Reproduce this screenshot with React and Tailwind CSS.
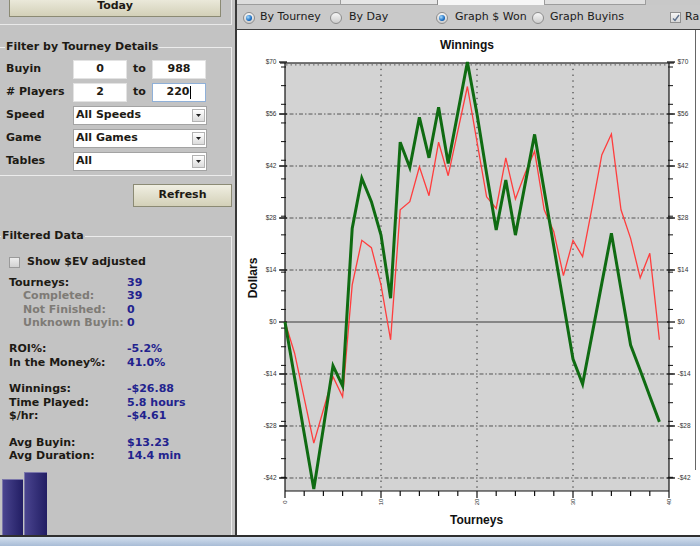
import React from 'react';

const green = [0, -15, -30, -45, -28.5, -11.8, -17.2, 25.2, 38.7, 32.4, 23.4, 6.4, 48.4, 41.6, 55.1, 44.2, 57.8, 42.7, 56.3, 70, 56, 40, 24.8, 38.2, 23.4, 37, 50.5, 35.4, 20.3, 5.2, -10, -16.7, -3.2, 10.4, 23.9, 8.8, -6.2, -13, -20, -26.9];
const red = [0, -8.4, -20.5, -32.6, -23.6, -14.7, -20.1, 10, 22, 20, 10, -4.8, 30.2, 32.4, 41.8, 34, 48.4, 39.4, 51.4, 63.4, 48.5, 33.7, 30.6, 44.2, 33.1, 40, 46, 30.2, 24.3, 12.5, 22, 17.6, 31, 45, 50.6, 30.2, 22.5, 11.9, 18.5, -4.8];

const X = (i) => 285 + i * 9.6;
const Y = (v) => 322 - v * 3.714;
const toPoints = (arr) => arr.map((v, i) => `${X(i).toFixed(1)},${Y(v).toFixed(1)}`).join(' ');

const majors = [70, 56, 42, 28, 14, 0, -14, -28, -42];

function Radio({ checked }) {
  return (
    <span className="w-[12px] h-[12px] shrink-0 rounded-full border border-[#8c8c8c] bg-linear-to-b from-[#f6f6f6] to-[#cdcdcd] flex items-center justify-center">
      {checked && (
        <span className="w-[6px] h-[6px] rounded-full bg-[radial-gradient(circle_at_35%_35%,#a6dcff,#1b6dc1_60%,#0d4a8f)]" />
      )}
    </span>
  );
}

function Field({ value, focused }) {
  return (
    <div
      className={`w-[54px] h-[19px] bg-white border flex items-center justify-center ${focused ? 'border-[#8fb0d8]' : 'border-[#e3e3e3]'}`}
    >
      {value}
      {focused && <span className="w-[1px] h-[13px] bg-black ml-[1px]" />}
    </div>
  );
}

function Select({ value }) {
  return (
    <div className="w-[134px] h-[19px] bg-white border border-[#a3a3a3] flex items-center">
      <span className="flex-1 pl-[2px]">{value}</span>
      <span className="w-[13px] h-[13px] mr-[1px] border border-[#b3b3b3] bg-linear-to-b from-white to-[#dcdcdc] flex items-center justify-center">
        <svg width="5" height="3" viewBox="0 0 5 3">
          <polygon points="0,0 5,0 2.5,3" fill="#222" />
        </svg>
      </span>
    </div>
  );
}

function Row({ label, children }) {
  return (
    <div className="flex items-center h-[19px]">
      <span className="w-[73px] pl-[6px]">{label}</span>
      {children}
    </div>
  );
}

const stats = [
  { label: 'Tourneys:', value: '39' },
  { label: 'Completed:', value: '39', sub: true },
  { label: 'Not Finished:', value: '0', sub: true },
  { label: 'Unknown Buyin:', value: '0', sub: true },
  null,
  { label: 'ROI%:', value: '-5.2%' },
  { label: 'In the Money%:', value: '41.0%' },
  null,
  { label: 'Winnings:', value: '-$26.88' },
  { label: 'Time Played:', value: '5.8 hours' },
  { label: '$/hr:', value: '-$4.61' },
  null,
  { label: 'Avg Buyin:', value: '$13.23' },
  { label: 'Avg Duration:', value: '14.4 min' },
];

function LeftPanel() {
  return (
    <div className="w-[235px] h-[535px] shrink-0 overflow-hidden flex flex-col text-[11px] font-bold text-[#1d1a14]">
      <div className="h-[25px] w-[232px] border-b border-r border-[#e9e9e9] px-[9px]">
        <div className="-mt-[4px] h-[21px] w-[212px] border-x border-b border-[#8b8a74] bg-linear-to-b from-[#f0efe2] to-[#d3d0b8] flex items-center justify-center">
          Today
        </div>
      </div>

      <fieldset className="mt-[15px] w-[232px] border border-l-0 border-[#ececec] p-0 pb-[4px]">
        <legend className="ml-[5px] px-[1px] leading-[14px]">Filter by Tourney Details</legend>
        <div className="pt-[6px] flex flex-col gap-[4px]">
          <Row label="Buyin">
            <Field value="0" />
            <span className="w-[25px] text-center">to</span>
            <Field value="988" />
          </Row>
          <Row label="# Players">
            <Field value="2" />
            <span className="w-[25px] text-center">to</span>
            <Field value="220" focused />
          </Row>
          <Row label="Speed">
            <Select value="All Speeds" />
          </Row>
          <Row label="Game">
            <Select value="All Games" />
          </Row>
          <Row label="Tables">
            <Select value="All" />
          </Row>
        </div>
      </fieldset>

      <div className="mt-[8px] ml-[133px] w-[99px] h-[23px] shrink-0 border border-[#8b8a74] bg-linear-to-b from-[#f0efe2] to-[#d3d0b8] flex items-center justify-center">
        Refresh
      </div>

      <fieldset className="mt-[22px] w-[232px] border-t border-r border-[#ececec] p-0">
        <legend className="ml-[1px] px-[1px] leading-[14px]">Filtered Data</legend>
        <div className="mt-[13px] h-[13px] flex items-center pl-[9px] gap-[7px]">
          <span className="w-[11px] h-[11px] border border-[#9a9a9a] bg-linear-to-b from-[#ededed] to-[#d2d2d2]" />
          Show $EV adjusted
        </div>
        <div className="mt-[7px] leading-[13.3px]">
          {stats.map((s, i) =>
            s ? (
              <div key={i} className="flex h-[13.3px]">
                <span className={`w-[127px] ${s.sub ? 'pl-[23px] text-[#7e7b76]' : 'pl-[9px]'}`}>{s.label}</span>
                <span className="text-[#22228e]">{s.value}</span>
              </div>
            ) : (
              <div key={i} className="h-[13.3px]" />
            )
          )}
        </div>
        <div className="mt-[9.5px] h-[63px] flex items-end gap-[1px] pl-[2px]">
          <div className="w-[21px] h-[56px] border-l border-t border-[#7b77aa] bg-linear-to-r from-[#4a448f] to-[#221d63]" />
          <div className="w-[23px] h-[63px] border-l border-t border-[#7b77aa] bg-linear-to-r from-[#4a448f] to-[#221d63]" />
        </div>
      </fieldset>
    </div>
  );
}

function Chart() {
  const minorY = [];
  for (let y = 67; y < 491; y += 18.65) minorY.push(y);
  const bottomTicks = [];
  for (let i = 0; i <= 40; i += 2) bottomTicks.push(i);
  const label = (v) => (v < 0 ? `-$${-v}` : `$${v}`);

  return (
    <svg width="463" height="505" viewBox="237 30 463 505" className="block">
      <rect x="285" y="63" width="384" height="428" fill="#d3d3d3" />

      {majors
        .filter((v) => v !== 70 && v !== 0)
        .map((v) => (
          <line key={v} x1="280" x2="674" y1={Y(v)} y2={Y(v)} stroke="#555" strokeWidth="1" strokeDasharray="4 2 1.5 2" />
        ))}
      {[381, 477, 573].map((x) => (
        <line key={x} x1={x} x2={x} y1="63" y2="491" stroke="#222" strokeWidth="1" strokeDasharray="1.3 4.5" />
      ))}
      <line x1="285" x2="669" y1={Y(0)} y2={Y(0)} stroke="#3a3a3a" strokeWidth="1.2" />

      <line x1="280" x2="674" y1="63" y2="63" stroke="#4a4a4a" strokeWidth="1.5" />
      <line x1="286" x2="668" y1="64.8" y2="64.8" stroke="#777" strokeWidth="1.2" strokeDasharray="1.5 3" />
      <line x1="285" x2="285" y1="63" y2="491" stroke="#111" strokeWidth="1.2" />
      <line x1="669" x2="669" y1="63" y2="491" stroke="#111" strokeWidth="1.2" />
      <line x1="285" x2="669" y1="491" y2="491" stroke="#111" strokeWidth="1.2" />

      {minorY.map((y, k) => (
        <g key={k}>
          <line x1="281" x2="286" y1={y} y2={y} stroke="#111" strokeWidth="1" />
          <line x1="668" x2="673" y1={y} y2={y} stroke="#111" strokeWidth="1" />
        </g>
      ))}
      {majors.map((v) => (
        <g key={v}>
          <line x1="279" x2="287" y1={Y(v)} y2={Y(v)} stroke="#111" strokeWidth="1.3" />
          <line x1="667" x2="675" y1={Y(v)} y2={Y(v)} stroke="#111" strokeWidth="1.3" />
          <text x="276.5" y={Y(v) + 2.2} fontSize="6.5" textAnchor="end" fill="#333" fontFamily="Liberation Sans, Arial, sans-serif">
            {label(v)}
          </text>
          <text x="677.5" y={Y(v) + 2.2} fontSize="6.5" fill="#333" fontFamily="Liberation Sans, Arial, sans-serif">
            {label(v)}
          </text>
        </g>
      ))}
      {bottomTicks.map((i) => (
        <line key={i} x1={X(i)} x2={X(i)} y1="491" y2={i % 10 === 0 ? 498 : 496} stroke="#111" strokeWidth="1.2" />
      ))}
      {[0, 10, 20, 30, 40].map((i) => (
        <text
          key={i}
          transform={`translate(${X(i) + 2},502) rotate(-90)`}
          fontSize="6"
          textAnchor="middle"
          fill="#333"
          fontFamily="Liberation Sans, Arial, sans-serif"
        >
          {i}
        </text>
      ))}

      <polyline points={toPoints(red)} fill="none" stroke="#ff3d3d" strokeWidth="1.3" />
      <polyline points={toPoints(green)} fill="none" stroke="#0f6b12" strokeWidth="3" />

      <text x="467" y="49" fontSize="12" fontWeight="bold" textAnchor="middle" fill="#111" fontFamily="Liberation Sans, Arial, sans-serif">
        Winnings
      </text>
      <text transform="translate(256.5,278) rotate(-90)" fontSize="12" fontWeight="bold" textAnchor="middle" fill="#111" fontFamily="Liberation Sans, Arial, sans-serif">
        Dollars
      </text>
      <text x="476.5" y="524" fontSize="12" fontWeight="bold" textAnchor="middle" fill="#111" fontFamily="Liberation Sans, Arial, sans-serif">
        Tourneys
      </text>
      <line x1="695.5" x2="695.5" y1="30" y2="470" stroke="#666" strokeWidth="1" />
    </svg>
  );
}

function RightPanel() {
  return (
    <div className="w-[465px] h-[535px] flex flex-col border-l-2 border-[#393939]">
      <div className="h-[5px] flex bg-[#c8c8c8]">
        <div className="w-[103px] bg-[#dcdcdc] border-b border-[#9c9c9c]" />
        <div className="w-[97px] bg-[#e6e6e6] border-l border-b border-[#9c9c9c]" />
        <div className="w-[107px] bg-[#f6f6f6] border-l border-[#8c8c8c]" />
        <div className="w-[101px] bg-[#e0e0e0] border-l border-b border-[#9c9c9c]" />
        <div className="flex-1 border-l border-[#9c9c9c]" />
      </div>
      <div className="h-[25px] shrink-0 bg-[#c9c9c9] border-b border-[#3d3d3d] flex items-center pl-[6px] pt-[1px] text-[11px] text-[#1b1b1b]">
        <div className="w-[87px] flex items-center gap-[5px]">
          <Radio checked />
          By Tourney
        </div>
        <div className="w-[106px] flex items-center gap-[7px]">
          <Radio />
          By Day
        </div>
        <div className="w-[96px] flex items-center gap-[7px]">
          <Radio checked />
          Graph $ Won
        </div>
        <div className="w-[138px] flex items-center gap-[6px]">
          <Radio />
          Graph Buyins
        </div>
        <div className="flex items-center gap-[4px] whitespace-nowrap">
          <span className="w-[11px] h-[11px] border border-[#8f8f8f] bg-linear-to-b from-[#f5f5f5] to-[#d8d8d8] flex items-center justify-center">
            <svg width="8" height="8" viewBox="0 0 8 8">
              <polyline points="1,4.5 3,6.5 7,1" fill="none" stroke="#5d708c" strokeWidth="1.4" />
            </svg>
          </span>
          Ra
        </div>
      </div>
      <div className="flex-1 bg-white overflow-hidden">
        <Chart />
      </div>
    </div>
  );
}

export default function App() {
  return (
    <div className="w-[700px] h-[546px] overflow-hidden flex flex-col bg-[#c3c3c3] font-['DejaVu_Sans',Verdana,sans-serif]">
      <div className="flex h-[535px] shrink-0">
        <LeftPanel />
        <RightPanel />
      </div>
      <div className="h-[2px] shrink-0 bg-[#2f2f2f]" />
      <div className="h-[9px] shrink-0 bg-linear-to-b from-[#d3dfee] to-[#a8bcd6]" />
    </div>
  );
}
